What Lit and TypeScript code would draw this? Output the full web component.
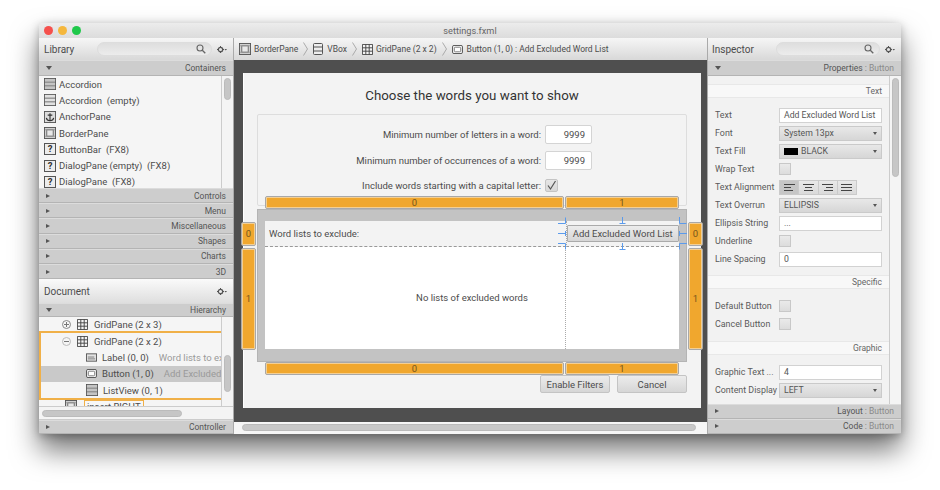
import { LitElement, html, css, svg } from "lit";
import { customElement } from "lit/decorators.js";

const box = (inner: unknown, fill = "#ececec") => html`<svg class="ic" width="12" height="12" viewBox="0 0 13 13"><rect x=".5" y=".5" width="12" height="12" fill=${fill} stroke="#555"/>${inner}</svg>`;
const accordion = (f = "#c4c4c4") => box(svg`<rect x="1" y="1" width="11" height="3" fill="${f}"/><rect x="1" y="5" width="11" height="3" fill="${f}"/><rect x="1" y="9" width="11" height="3" fill="${f}"/><path d="M1 4.500h11M1 8.500h11" stroke="#666"/>`);
const anchor = () => box(svg`<path d="M6.500 2.500v8M4 4.500h5M2.500 7.500c.5 2.500 2 3 4 3s3.500-.5 4-3" fill="none" stroke="#333" stroke-width="1.200"/>`, "#dcdcdc");
const border = () => box(svg`<rect x="3" y="3" width="7" height="7" fill="#e8e8e8" stroke="#666"/><path d="M1 3h11M1 10h11" stroke="#999"/>`, "#d0d0d0");
const q = () => html`<span class="q">?</span>`;
const grid = () => html`<svg class="ic" width="11" height="11" viewBox="0 0 13 13"><path d="M.5.500h12v12H.5zM4.500.5v12M8.500.5v12M.5 4.500h12M.5 8.500h12" fill="#f4f4f4" stroke="#444" stroke-width="1.100"/></svg>`;
const vbox = () => html`<svg class="ic" width="10" height="12" viewBox="0 0 10 12"><rect x=".5" y=".5" width="9" height="11" rx="1" fill="#eee" stroke="#555"/><path d="M.5 4h9M.5 8h9" stroke="#555"/></svg>`;
const ok = () => html`<svg class="ic" width="11" height="9" viewBox="0 0 12 10"><rect x=".5" y=".5" width="11" height="9" rx="1.500" fill="#f4f4f4" stroke="#444"/><rect x="2.500" y="2.500" width="7" height="5" rx="1" fill="#fff" stroke="#777"/></svg>`;
const abc = () => html`<svg class="ic" width="11" height="9" viewBox="0 0 12 9"><rect x=".5" y=".5" width="11" height="8" fill="#e2e2e2" stroke="#555"/><path d="M2 6h8M2 4h7" stroke="#777"/></svg>`;
const gear = () => html`<svg class="gear" width="10" height="7" viewBox="0 0 10 7"><circle cx="3.500" cy="3.500" r="2.200" fill="none" stroke="#555" stroke-width="1.300"/><path d="M3.500 0v1M3.500 6v1M0 3.500h1M6 3.500h1" stroke="#555"/><path d="M7.500 3h2.500L8.750 4.600z" fill="#555"/></svg>`;
const search = () => html`<svg width="10" height="10" viewBox="0 0 10 10"><circle cx="4" cy="4" r="3" fill="none" stroke="#666" stroke-width="1.100"/><path d="M6.300 6.300L9.300 9.300" stroke="#666" stroke-width="1.300"/></svg>`;
const chev = () => html`<svg class="chev" width="5" height="14" viewBox="0 0 5 14"><path d="M.5.500L4.500 7L.5 13.500" fill="none" stroke="#aaa"/></svg>`;
const tri = (open: boolean) => html`<span class=${open ? "tri open" : "tri"}></span>`;

const head = (title: string, cls: string) => html`<div class="head ${cls}"><span>${title}</span><div class="search">${search()}</div>${gear()}</div>`;
const sect = (label: unknown, open = false, cls = "") => html`<div class="sect ${cls}">${tri(open)}<span>${label}</span></div>`;
const sub = (a: string) => html`${a} <i>:</i> <em>Button</em>`;

const lib: [unknown, string][] = [
  [accordion(), "Accordion"],
  [accordion("#e0e0e0"), "Accordion  (empty)"],
  [anchor(), "AnchorPane"],
  [border(), "BorderPane"],
  [q(), "ButtonBar  (FX8)"],
  [q(), "DialogPane (empty)  (FX8)"],
  [q(), "DialogPane  (FX8)"],
];

@customElement("app-root")
export class AppRoot extends LitElement {
  static styles = css`
    :host { display: block; width: 940px; height: 490px; background: #fff; overflow: hidden; font: 9.5px Roboto, sans-serif; color: #4c4c4c; }
    * { box-sizing: border-box; }
    .page { padding: 23px 39px 0; }
    .win { width: 862px; height: 411px; display: flex; flex-direction: column; border-radius: 4px 4px 0 0; box-shadow: 0 16px 28px rgba(0,0,0,.55), 0 2px 8px rgba(0,0,0,.25); background: #f2f2f2; }
    .title { height: 15px; flex: none; position: relative; display: flex; align-items: center; justify-content: center; border-radius: 4px 4px 0 0; background: linear-gradient(#ececec, #dcdcdc); color: #666; font-size: 9.200px; }
    .lights { position: absolute; left: 5px; top: 3px; display: flex; gap: 5px; }
    .lights b { width: 9px; height: 9px; border-radius: 50%; }
    .lr { background: #f5504c; } .ly { background: #f5b73c; } .lg { background: #1fc84a; }
    .body { flex: 1; min-height: 0; display: grid; grid-template-columns: 195px 473px 194px; }
    .left, .right { display: flex; flex-direction: column; min-height: 0; }
    .left { border-right: 1px solid #aaa; }
    .head { height: 22px; flex: none; display: flex; align-items: center; padding: 0 6px 0 5px; background: linear-gradient(#f6f6f6, #d8d8d8); font-size: 10px; }
    .head.lib > span { width: 53px; }
    .head.ins-h { padding-left: 4px; }
    .head.ins-h > span { width: 64px; }
    .head .search { flex: 1; height: 14px; margin-right: 5px; border-radius: 7px; border: 1px solid #ddd; background: linear-gradient(#dedede, #ececec); display: flex; align-items: center; justify-content: flex-end; padding-right: 5px; }
    .doc { height: 24px; flex: none; display: flex; align-items: center; justify-content: space-between; padding: 0 6px 0 5px; background: linear-gradient(#fafafa, #dedede); font-size: 10px; }
    .sect { height: 15.200px; flex: none; display: flex; align-items: center; justify-content: space-between; padding: 0 7px; background: #cdcdcd; border-bottom: 1px solid #b4b4b4; border-top: 1px solid #dcdcdc; font-size: 8.500px; color: #555; }
    .sect.big { height: 16px; }
    .sect.hier { height: 14px; }
    .sect.ctl { height: 14px; }
    .sect i { font-style: normal; color: #777; } .sect em { font-style: normal; color: #8a8a8a; }
    .tri { width: 0; height: 0; border-left: 4px solid #555; border-top: 2.500px solid transparent; border-bottom: 2.500px solid transparent; }
    .tri.open { border-left: 3px solid transparent; border-right: 3px solid transparent; border-top: 4px solid #555; border-bottom: 0; }
    .list { height: 112px; flex: none; display: flex; background: #f5f5f5; overflow: hidden; }
    .rows { flex: 1; min-width: 0; overflow: hidden; }
    .bar { width: 12px; flex: none; border-left: 1px solid #ccc; background: #f4f4f4; padding: 2px 2px 0 2px; }
    .thumb { background: #c6c6c6; border-radius: 4px; border: 1px solid #bbb; width: 7px; }
    .t1 { height: 22px; }
    .t2 { height: 37px; margin-top: 36px; }
    .t3 { height: 99px; }
    .row { height: 16.300px; display: flex; align-items: center; gap: 3px; padding-left: 5px; white-space: pre; }
    .q { width: 12px; height: 12px; flex: none; border: 1px solid #555; background: #ececec; font-weight: 700; font-size: 9.500px; text-align: center; line-height: 10px; color: #333; }
    .ic { flex: none; }
    .tree { height: 90px; flex: none; display: flex; background: #f5f5f5; overflow: hidden; border-bottom: 1px solid #ccc; }
    .tr { height: 16.250px; display: flex; align-items: center; white-space: pre; overflow: hidden; }
    .tr.first { height: 14px; }
    .tr.on { background: #c9c9c9; }
    .tr .dim { color: #9a9a9a; margin-left: 5px; }
    .l1 { padding-left: 23px; gap: 6px; }
    .l2 { padding-left: 47px; gap: 5px; }
    .exp { width: 9px; height: 9px; flex: none; border-radius: 50%; border: 1px solid #888; position: relative; }
    .exp.off { border-color: #bbb; }
    .exp::before { content: ""; position: absolute; left: 1px; right: 1px; top: 3px; height: 1px; background: #777; }
    .exp.plus::after { content: ""; position: absolute; top: 1px; bottom: 1px; left: 3px; width: 1px; background: #777; }
    .grp { border: 2px solid #f0b048; border-right: 0; }
    .grp .l1 { padding-left: 21px; } .grp .l2 { padding-left: 45px; }
    .ins { display: flex; padding: 0 0 0 26px; gap: 7px; align-items: flex-start; }
    .ins span { border: 1px solid #f0b048; background: #f7f7f7; padding: 0 2px; height: 14px; line-height: 12px; width: 60px; white-space: nowrap; }
    .hs { height: 13px; flex: none; background: #f4f4f4; padding: 3px; display: flex; border-bottom: 1px solid #ccc; }
    .hs b { display: block; width: 140px; height: 7px; background: #c6c6c6; border: 1px solid #bbb; border-radius: 4px; }
    .center { display: flex; flex-direction: column; min-height: 0; min-width: 0; }
    .crumb { height: 22px; flex: none; display: flex; align-items: center; padding-left: 5px; background: linear-gradient(#f6f6f6, #d8d8d8); white-space: pre; font-size: 8.500px; }
    .crumb .ic { margin-right: 3px; }
    .crumb .chev { margin: 0 5px; }
    .crumb .vb { margin-right: 1px; display: flex; }
    .canvas { flex: 1; min-height: 0; background: #4f4f4f; padding: 13px 6px 14px 9px; }
    .form { position: relative; height: 335px; background: #f3f3f3; padding: 0 14px 0 13px; border-left: 1px solid #fff; display: flex; flex-direction: column; }
    h1 { margin: 0; height: 41px; font-size: 13.300px; font-weight: 400; color: #333; text-align: center; line-height: 45px; }
    .tbox { height: 92px; flex: none; border: 1px solid #ddd; border-radius: 2px; padding: 10px 94px 0 0; display: flex; flex-direction: column; align-items: flex-end; gap: 6.500px; }
    .fr { display: flex; align-items: center; gap: 4px; white-space: pre; }
    .num { width: 47px; height: 19px; background: #fff; border: 1px solid #d4d4d4; border-radius: 2px; text-align: right; padding-right: 6px; line-height: 17px; }
    .cb { width: 13px; height: 13px; background: linear-gradient(#e6e6e6, #d8d8d8); border: 1px solid #c4c4c4; border-radius: 2px; display: flex; }
    .fr.c { margin-top: 3px; padding-right: 34px; }
    .gp { height: 152.500px; flex: none; margin-top: 3px; background: #c3c3c3; border: 1px solid #b4b4b4; padding: 11px 7px 12px; display: grid; grid-template-columns: 300.500px 1fr; grid-template-rows: 26px 1fr; }
    .gl { grid-column: 1; background: #f3f3f3; padding: 0 0 1px 4px; display: flex; align-items: center; border-bottom: 1px dashed #999; height: 26px; }
    .gb { background: #f3f3f3; border-bottom: 1px dashed #999; border-left: 1px dotted #aaa; padding-top: 4px; height: 26px; }
    .btn { height: 18px; background: linear-gradient(#ececec, #d6d6d6); border: 1px solid #c4c4c4; border-radius: 2px; display: flex; align-items: center; justify-content: center; white-space: nowrap; }
    .gb .btn { height: 17px; border-color: #aaa; border-radius: 1px; }
    .lv { grid-column: 1 / 3; background: #fff; display: grid; grid-template-columns: 301px 1fr; }
    .lv span { display: flex; align-items: center; justify-content: center; border-right: 1px dotted #aaa; padding-left: 114px; white-space: pre; }
    .acts { display: flex; justify-content: flex-end; gap: 7px; margin-top: 13.500px; }
    .acts .btn { width: 70px; }
    .rul { position: absolute; background: #f0a72e; border: 1px solid #a8a8a8; border-radius: 2px; box-shadow: inset 0 0 0 .5px #f7f7f7; display: flex; align-items: center; justify-content: center; color: #75551c; }
    .marks { position: absolute; left: 0; top: 0; pointer-events: none; overflow: visible; }
    .hsb { height: 12px; flex: none; background: #f6f6f6; padding: 2px 11px 2px 8px; }
    .hsb b { display: block; height: 7px; background: #c8c8c8; border: 1px solid #bbb; border-radius: 4px; }
    .right { border-left: 1px solid #aaa; }
    .insp { flex: 1; min-height: 0; display: flex; background: #f2f2f2; overflow: hidden; }
    .pp { flex: 1; min-width: 0; padding-top: 8px; }
    .band { height: 14px; background: #f8f8f8; border-top: 1px solid #e8e8e8; border-bottom: 1px solid #e8e8e8; text-align: right; padding-right: 7px; line-height: 12px; font-size: 8.500px; color: #666; }
    .props { padding: 8px 7px 7px; }
    .props.pg { padding-bottom: 8px; }
    .pr { height: 18px; display: grid; grid-template-columns: 64px 1fr; align-items: center; font-size: 8.900px; color: #5a5a5a; white-space: nowrap; }
    .tf { height: 15px; background: #fff; border: 1px solid #d2d2d2; padding-left: 4px; line-height: 13px; color: #555; overflow: hidden; font-size: 8.700px; }
    .cbx { width: 12px; height: 12px; background: linear-gradient(#eaeaea, #dcdcdc); border: 1px solid #c8c8c8; }
    .dd { height: 15px; background: linear-gradient(#e8e8e8, #d6d6d6); border: 1px solid #cacaca; padding: 0 4px; display: flex; align-items: center; gap: 3px; color: #555; font-size: 8.700px; }
    .dd::after { content: ""; margin-left: auto; border-left: 2.500px solid transparent; border-right: 2.500px solid transparent; border-top: 3px solid #555; }
    .sw { width: 14px; height: 7px; background: #000; }
    .seg { display: flex; width: 78px; height: 15px; }
    .seg b { flex: 1; background: linear-gradient(#e8e8e8, #dadada); border: 1px solid #cacaca; border-left-width: 0; display: flex; align-items: center; justify-content: center; }
    .seg b:first-child { background: #c6c6c6; border-left-width: 1px; }
    .seg svg { display: block; }
    .foot { flex: none; }
  `;

  private alignIcon(p: string) {
    return html`<svg width="11" height="7" viewBox="0 0 11 7"><path d=${p} stroke="#444" fill="none"/></svg>`;
  }

  private prop(label: string, ctl: unknown) {
    return html`<div class="pr"><span>${label}</span>${ctl}</div>`;
  }

  render() {
    const tf = (t: string) => html`<div class="tf">${t}</div>`;
    const sl = (t: unknown) => html`<div class="dd">${t}</div>`;
    const cb = html`<div class="cbx"></div>`;
    return html`<div class="page"><div class="win">
      <div class="title"><div class="lights"><b class="lr"></b><b class="ly"></b><b class="lg"></b></div>settings.fxml</div>
      <div class="body">
        <div class="left">
          ${head("Library", "lib")}
          ${sect("Containers", true, "big")}
          <div class="list">
            <div class="rows">${lib.map(([i, t]) => html`<div class="row">${i}<span>${t}</span></div>`)}</div>
            <div class="bar"><div class="thumb t1"></div></div>
          </div>
          ${["Controls", "Menu", "Miscellaneous", "Shapes", "Charts", "3D"].map((s) => sect(s))}
          <div class="doc"><span>Document</span>${gear()}</div>
          ${sect("Hierarchy", true, "hier")}
          <div class="tree">
            <div class="rows">
              <div class="tr first l1"><span class="exp plus"></span>${grid()}<span>GridPane (2 x 3)</span></div>
              <div class="grp">
                <div class="tr l1"><span class="exp off"></span>${grid()}<span>GridPane (2 x 2)</span></div>
                <div class="tr l2">${abc()}<span>Label (0, 0)</span><span class="dim">Word lists to exclude:</span></div>
                <div class="tr l2 on">${ok()}<span>Button (1, 0)</span><span class="dim">Add Excluded Word List</span></div>
                <div class="tr l2">${accordion()}<span>ListView (0, 1)</span></div>
              </div>
              <div class="ins">${border()}<span>insert RIGHT</span></div>
            </div>
            <div class="bar"><div class="thumb t2"></div></div>
          </div>
          <div class="hs"><b></b></div>
          ${sect("Controller", false, "ctl")}
        </div>

        <div class="center">
          <div class="crumb">
            ${border()}<span>BorderPane</span>${chev()}
            ${vbox()}<span class="vb"></span><span>VBox</span>${chev()}
            ${grid()}<span>GridPane (2 x 2)</span>${chev()}
            ${ok()}<span class="vb"></span><span>Button (1, 0) : Add Excluded Word List</span>
          </div>
          <div class="canvas">
            <div class="form">
              <h1>Choose the words you want to show</h1>
              <div class="tbox">
                <div class="fr"><span>Minimum number of letters in a word:</span><div class="num">9999</div></div>
                <div class="fr"><span>Minimum number of occurrences of a word:</span><div class="num">9999</div></div>
                <div class="fr c"><span>Include words starting with a capital letter:</span><div class="cb"><svg width="11" height="11" viewBox="0 0 11 11"><path d="M2 5.500L4.500 9L9.500 1" fill="none" stroke="#555" stroke-width="1.200"/></svg></div></div>
              </div>
              <div class="gp">
                <div class="gl">Word lists to exclude:</div>
                <div class="gb"><div class="btn">Add Excluded Word List</div></div>
                <div class="lv"><span>No lists of excluded words</span><i></i></div>
              </div>
              <div class="acts"><div class="btn">Enable Filters</div><div class="btn">Cancel</div></div>

              <div class="rul" style="left:21px;top:122.500px;width:299px;height:13px">0</div>
              <div class="rul" style="left:321px;top:122.500px;width:114px;height:13px">1</div>
              <div class="rul" style="left:21px;top:289px;width:299px;height:13px">0</div>
              <div class="rul" style="left:321px;top:289px;width:114px;height:13px">1</div>
              <div class="rul" style="left:-3px;top:148.500px;width:15px;height:24px">0</div>
              <div class="rul" style="left:-3px;top:174.500px;width:15px;height:102px">1</div>
              <div class="rul" style="left:444px;top:148.500px;width:15px;height:24px">0</div>
              <div class="rul" style="left:444px;top:174.500px;width:15px;height:102px">1</div>
              <svg class="marks" width="458" height="335" viewBox="244 73 458 335" fill="none" stroke="#5b9bec">
                <path d="M558 223.500h7.500v-6M622.500 217v7M619.500 223.500h6M679.500 217v6.500h7M558 233.500h7M565.500 231v5M679.500 231v5M680 233.500h7M558 243.500h7.500v6M622.500 243v7M619.500 249.500h6M687 243.500h-7.500v6"/>
              </svg>
            </div>
          </div>
          <div class="hsb"><b></b></div>
        </div>

        <div class="right">
          ${head("Inspector", "ins-h")}
          ${sect(sub("Properties"), true, "big")}
          <div class="insp">
            <div class="pp">
              <div class="band">Text</div>
              <div class="props">
                ${this.prop("Text", tf("Add Excluded Word List"))}
                ${this.prop("Font", sl("System 13px"))}
                ${this.prop("Text Fill", sl(html`<span class="sw"></span>BLACK`))}
                ${this.prop("Wrap Text", cb)}
                ${this.prop("Text Alignment", html`<div class="seg">
                  <b>${this.alignIcon("M0 .5h11M0 3.500h7M0 6.500h9")}</b>
                  <b>${this.alignIcon("M0 .5h11M2 3.500h7M1 6.500h9")}</b>
                  <b>${this.alignIcon("M0 .5h11M4 3.500h7M2 6.500h9")}</b>
                  <b>${this.alignIcon("M0 .5h11M0 3.500h11M0 6.500h11")}</b>
                </div>`)}
                ${this.prop("Text Overrun", sl("ELLIPSIS"))}
                ${this.prop("Ellipsis String", tf("..."))}
                ${this.prop("Underline", cb)}
                ${this.prop("Line Spacing", tf("0"))}
              </div>
              <div class="band">Specific</div>
              <div class="props pg">
                ${this.prop("Default Button", cb)}
                ${this.prop("Cancel Button", cb)}
              </div>
              <div class="band">Graphic</div>
              <div class="props pg">
                ${this.prop("Graphic Text ...", tf("4"))}
                ${this.prop("Content Display", sl("LEFT"))}
              </div>
            </div>
            <div class="bar"><div class="thumb t3"></div></div>
          </div>
          <div class="foot">${sect(sub("Layout"))}${sect(sub("Code"))}</div>
        </div>
      </div>
    </div></div>`;
  }
}
